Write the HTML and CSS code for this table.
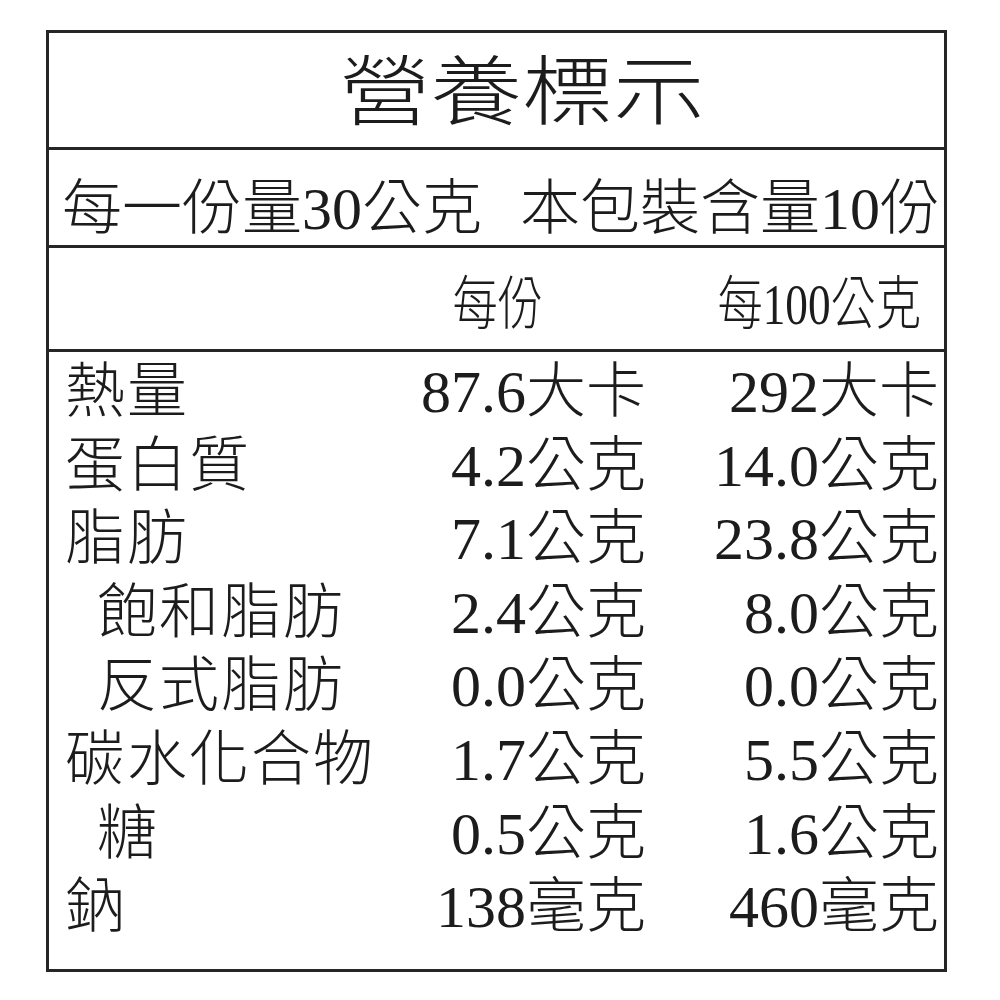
FILE: index.html
```html
<!DOCTYPE html>
<html lang="zh-Hant">
<head>
<meta charset="utf-8">
<title>營養標示</title>
<link rel="stylesheet" href="styles.css">
</head>
<body>
<div class="label">
  <div class="title"><span class="wide">營養標示</span></div>
  <div class="serving"><span>每一份量30公克</span><span>本包裝含量10份</span></div>
  <div class="head">
    <span></span>
    <span class="hcell h2"><span class="narrow">每份</span></span>
    <span class="hcell h3"><span class="narrow">每100公克</span></span>
  </div>
  <div class="rows">
    <div class="row"><span class="name">熱量</span><span class="v">87.6大卡</span><span class="v">292大卡</span></div>
    <div class="row"><span class="name">蛋白質</span><span class="v">4.2公克</span><span class="v">14.0公克</span></div>
    <div class="row"><span class="name">脂肪</span><span class="v">7.1公克</span><span class="v">23.8公克</span></div>
    <div class="row"><span class="name sub">飽和脂肪</span><span class="v">2.4公克</span><span class="v">8.0公克</span></div>
    <div class="row"><span class="name sub">反式脂肪</span><span class="v">0.0公克</span><span class="v">0.0公克</span></div>
    <div class="row"><span class="name">碳水化合物</span><span class="v">1.7公克</span><span class="v">5.5公克</span></div>
    <div class="row"><span class="name sub">糖</span><span class="v">0.5公克</span><span class="v">1.6公克</span></div>
    <div class="row"><span class="name">鈉</span><span class="v">138毫克</span><span class="v">460毫克</span></div>
  </div>
</div>
</body>
</html>
```
FILE: styles.css
```css
html, body {
  margin: 0;
  padding: 0;
  background: #fff;
}
body {
  font-family: "Liberation Serif", "Noto Sans CJK TC", serif;
  font-weight: 300;
  color: #1c1c1c;
}
.label {
  box-sizing: border-box;
  width: 901px;
  height: 942px;
  margin: 30px 0 0 46px;
  border: 3px solid #262626;
  display: flex;
  flex-direction: column;
  overflow: hidden;
}
.title {
  height: 117px;
  box-sizing: border-box;
  padding-top: 7px;
  border-bottom: 3px solid #262626;
  font-size: 76px;
  line-height: 106px;
  text-align: center;
  padding-left: 50px;
  white-space: nowrap;
}
.wide {
  display: inline-block;
  transform: scaleX(1.2);
  transform-origin: center center;
}
.serving {
  height: 98px;
  border-bottom: 3px solid #262626;
  display: flex;
  justify-content: space-between;
  align-items: center;
  padding: 10px 4px 0 13px;
  box-sizing: border-box;
  font-size: 60px;
  white-space: nowrap;
}
.head {
  height: 101px;
  border-bottom: 3px solid #262626;
  display: grid;
  grid-template-columns: 1fr 225px 293px;
  padding: 0 5px 0 17px;
  align-items: center;
  font-size: 58px;
  white-space: nowrap;
}
.hcell {
  text-align: right;
}
.h2 { padding-right: 103px; }
.h3 { padding-right: 18px; }
.narrow {
  display: inline-block;
  transform: scaleX(0.78);
  transform-origin: right center;
}
.rows {
  margin-top: -10px;
  padding: 0 5px 0 16px;
}
.row {
  display: grid;
  grid-template-columns: 1fr 225px 293px;
  height: 73.6px;
  align-items: center;
  font-size: 60px;
  white-space: nowrap;
}
.name {
  letter-spacing: 2px;
}
.name.sub {
  padding-left: 32px;
}
.v {
  text-align: right;
}
```
